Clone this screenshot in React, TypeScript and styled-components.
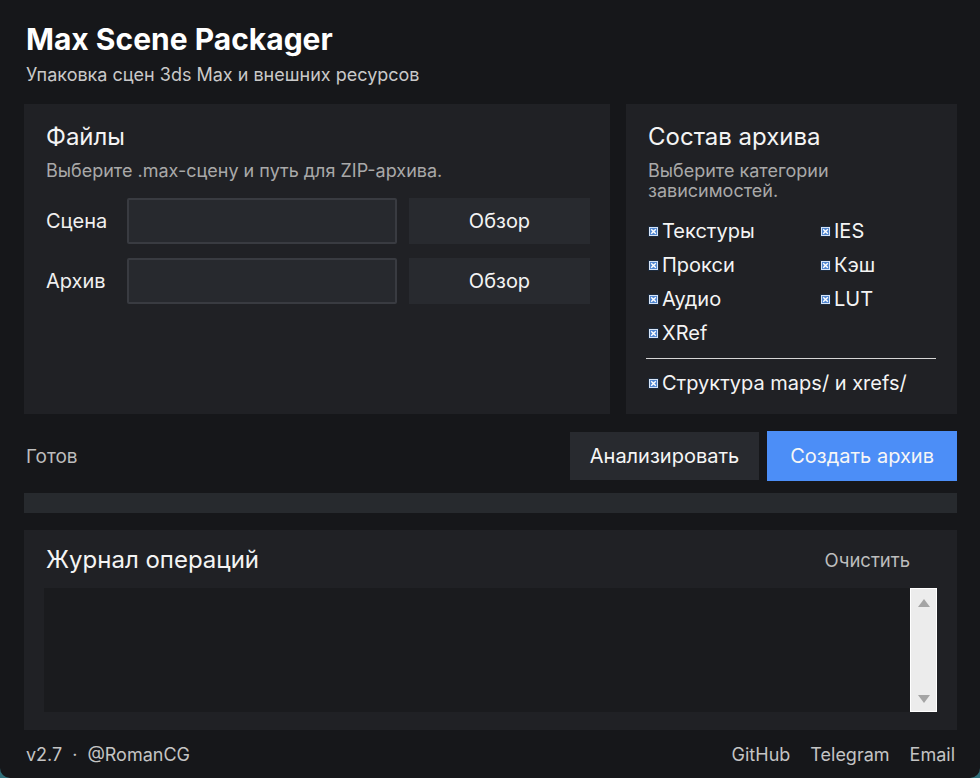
import { createGlobalStyle, styled } from 'styled-components';

const GlobalStyle = createGlobalStyle`
  html, body {
    margin: 0;
    padding: 0;
    background: #2f6f7a;
  }
  body {
    font-family: Inter, "Noto Sans", "Liberation Sans", sans-serif;
    color: #f2f2f2;
  }
  * {
    box-sizing: border-box;
  }
`;

const deps = [
  ['Текстуры', 'IES'],
  ['Прокси', 'Кэш'],
  ['Аудио', 'LUT'],
  ['XRef', null],
];

const CheckMark = () => (
  <svg width="11" height="11" viewBox="0 0 11 11">
    <rect x="0.5" y="0.5" width="10" height="10" fill="#d6e4f7" stroke="#1c2a3c" />
    <rect x="2" y="2" width="7" height="7" fill="#4f86d1" />
    <path d="M3.2 3.2 L7.8 7.8 M7.8 3.2 L3.2 7.8" stroke="#ffffff" strokeWidth="1.4" />
  </svg>
);

const Check = ({ label }: { label: string }) => (
  <CheckRow>
    <CheckMark />
    <span>{label}</span>
  </CheckRow>
);

export default function App() {
  return (
    <Window>
      <GlobalStyle />
      <Header>
        <Title>Max Scene Packager</Title>
        <Tagline>Упаковка сцен 3ds Max и внешних ресурсов</Tagline>
      </Header>

      <TopGrid>
        <Card>
          <CardTitle>Файлы</CardTitle>
          <CardHint>Выберите .max-сцену и путь для ZIP-архива.</CardHint>
          <FieldGrid>
            <FieldLabel>Сцена</FieldLabel>
            <PathInput />
            <BrowseButton>Обзор</BrowseButton>
            <FieldLabel>Архив</FieldLabel>
            <PathInput />
            <BrowseButton>Обзор</BrowseButton>
          </FieldGrid>
        </Card>

        <Card>
          <CardTitle>Состав архива</CardTitle>
          <CardHint>
            Выберите категории
            <br />
            зависимостей.
          </CardHint>
          <CheckGrid>
            {deps.map(([a, b]) => (
              <CheckLine key={a}>
                <Check label={a as string} />
                {b && <Check label={b} />}
              </CheckLine>
            ))}
          </CheckGrid>
          <Divider />
          <Check label="Структура maps/ и xrefs/" />
        </Card>
      </TopGrid>

      <ActionRow>
        <Status>Готов</Status>
        <Actions>
          <ActionButton>Анализировать</ActionButton>
          <ActionButton $primary>Создать архив</ActionButton>
        </Actions>
      </ActionRow>

      <Progress />

      <LogCard>
        <LogHeader>
          <CardTitle>Журнал операций</CardTitle>
          <ClearButton>Очистить</ClearButton>
        </LogHeader>
        <LogBody>
          <LogText />
          <ScrollTrack>
            <Arrow $dir="up" />
            <Arrow $dir="down" />
          </ScrollTrack>
        </LogBody>
      </LogCard>

      <Footer>
        <Credits>
          <span>v2.7</span>
          <span>·</span>
          <span>@RomanCG</span>
        </Credits>
        <Links>
          <span>GitHub</span>
          <span>Telegram</span>
          <span>Email</span>
        </Links>
      </Footer>
    </Window>
  );
}

const Window = styled.div`
  width: 980px;
  height: 778px;
  background: #16171a;
  border-radius: 0 0 10px 10px;
  padding: 18px 23px 0 24px;
  display: flex;
  flex-direction: column;
`;

const Header = styled.div`
  display: flex;
  flex-direction: column;
  padding-left: 2px;
  margin-bottom: 14px;
`;

const Title = styled.h1`
  margin: 0;
  font-size: 30px;
  line-height: 42px;
  font-weight: 700;
  color: #ffffff;
`;

const Tagline = styled.div`
  font-size: 18px;
  line-height: 30px;
  color: #c9c9c9;
`;

const TopGrid = styled.div`
  display: grid;
  grid-template-columns: 586px 1fr;
  gap: 16px;
  height: 310px;
`;

const Card = styled.div`
  background: #202125;
  padding: 16px 20px 0 22px;
  display: flex;
  flex-direction: column;
`;

const CardTitle = styled.div`
  font-size: 24px;
  line-height: 34px;
  color: #f4f4f4;
`;

const CardHint = styled.div`
  font-size: 18px;
  line-height: 20px;
  color: #a9a9a9;
  margin-top: 7px;
`;

const FieldGrid = styled.div`
  display: grid;
  grid-template-columns: 69px 270px 1fr;
  column-gap: 12px;
  row-gap: 14px;
  margin-top: 17px;
  align-items: center;
`;

const FieldLabel = styled.div`
  font-size: 20px;
  color: #f0f0f0;
`;

const PathInput = styled.div`
  height: 46px;
  background: #27292e;
  border: 2px solid #393b41;
  border-radius: 2px;
`;

const BrowseButton = styled.div`
  height: 46px;
  background: #282a2f;
  display: flex;
  align-items: center;
  justify-content: center;
  font-size: 20px;
  color: #f4f4f4;
`;

const CheckGrid = styled.div`
  display: flex;
  flex-direction: column;
  gap: 10px;
  margin-top: 18px;
`;

const CheckLine = styled.div`
  display: grid;
  grid-template-columns: 172px 1fr;
`;

const CheckRow = styled.div`
  display: flex;
  align-items: center;
  gap: 3px;
  font-size: 20px;
  line-height: 24px;
  color: #f4f4f4;
`;

const Divider = styled.div`
  height: 1px;
  background: #d6d6d6;
  margin: 13px 1px 12px -2px;
`;

const ActionRow = styled.div`
  display: flex;
  align-items: center;
  justify-content: space-between;
  margin-top: 17px;
`;

const Status = styled.div`
  font-size: 19px;
  color: #bdbdbd;
  padding-left: 2px;
`;

const Actions = styled.div`
  display: flex;
  gap: 8px;
  align-items: center;
`;

const ActionButton = styled.div<{ $primary?: boolean }>`
  height: ${({ $primary }) => ($primary ? '50px' : '48px')};
  padding: 0 ${({ $primary }) => ($primary ? '23px' : '20px')};
  display: flex;
  align-items: center;
  font-size: 20px;
  color: #f6f6f6;
  background: ${({ $primary }) => ($primary ? '#4c8ef7' : '#282a2f')};
`;

const Progress = styled.div`
  height: 20px;
  background: #272a2e;
  margin-top: 12px;
`;

const LogCard = styled.div`
  margin-top: 17px;
  height: 200px;
  background: #202125;
  padding: 14px 20px 18px 20px;
  display: flex;
  flex-direction: column;
`;

const LogHeader = styled.div`
  display: flex;
  align-items: center;
  justify-content: space-between;
  padding: 0 27px 0 2px;
  height: 32px;
`;

const ClearButton = styled.div`
  font-size: 18.5px;
  color: #bdbdbd;
`;

const LogBody = styled.div`
  flex: 1;
  margin-top: 12px;
  display: flex;
`;

const LogText = styled.div`
  flex: 1;
  background: #1a1b1e;
`;

const ScrollTrack = styled.div`
  width: 27px;
  background: #ececec;
  border: 1px solid #ffffff;
  display: flex;
  flex-direction: column;
  align-items: center;
  justify-content: space-between;
  padding: 10px 0 8px;
`;

const Arrow = styled.div<{ $dir: 'up' | 'down' }>`
  width: 0;
  height: 0;
  border-left: 6px solid transparent;
  border-right: 6px solid transparent;
  ${({ $dir }) =>
    $dir === 'up' ? 'border-bottom: 8px solid #a4a4a4;' : 'border-top: 8px solid #a4a4a4;'}
`;

const Footer = styled.div`
  flex: 1;
  display: flex;
  align-items: center;
  justify-content: space-between;
  font-size: 18px;
  color: #c4c4c4;
  padding: 0 2px 0 2px;
`;

const Credits = styled.div`
  display: flex;
  gap: 10px;
`;

const Links = styled.div`
  display: flex;
  gap: 20px;
`;
